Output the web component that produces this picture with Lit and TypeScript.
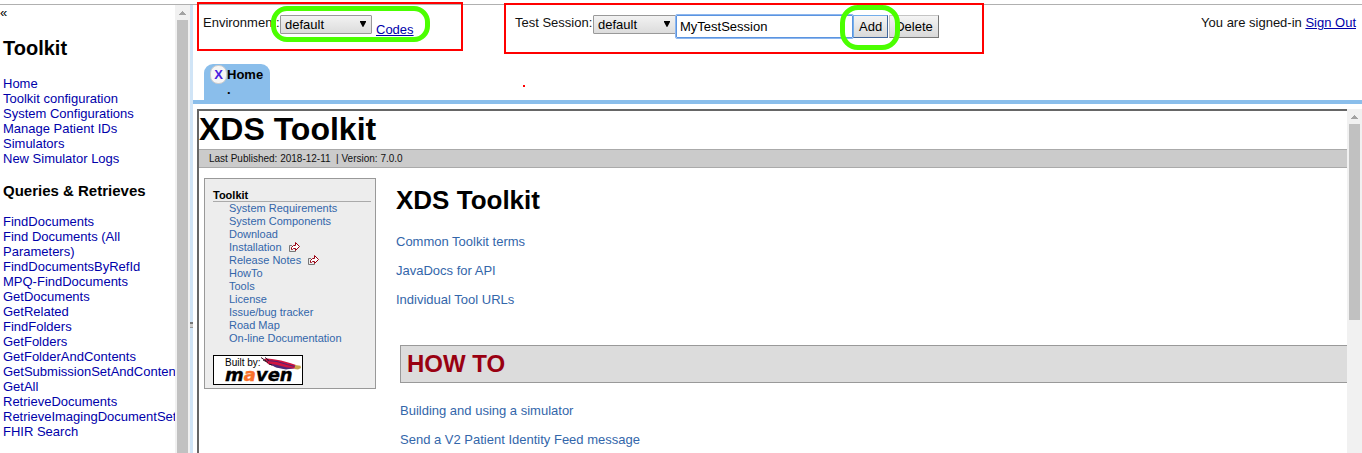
import { LitElement, html, css, svg } from "lit";
import { customElement, state } from "lit/decorators.js";

const TOOL_LINKS = [
  "Home",
  "Toolkit configuration",
  "System Configurations",
  "Manage Patient IDs",
  "Simulators",
  "New Simulator Logs",
];

const QUERY_LINKS = [
  "FindDocuments",
  "Find Documents (All Parameters)",
  "FindDocumentsByRefId",
  "MPQ-FindDocuments",
  "GetDocuments",
  "GetRelated",
  "FindFolders",
  "GetFolders",
  "GetFolderAndContents",
  "GetSubmissionSetAndContents",
  "GetAll",
  "RetrieveDocuments",
  "RetrieveImagingDocumentSet",
  "FHIR Search",
];

const SITE_LINKS: { label: string; external?: boolean }[] = [
  { label: "System Requirements" },
  { label: "System Components" },
  { label: "Download" },
  { label: "Installation", external: true },
  { label: "Release Notes", external: true },
  { label: "HowTo" },
  { label: "Tools" },
  { label: "License" },
  { label: "Issue/bug tracker" },
  { label: "Road Map" },
  { label: "On-line Documentation" },
];

@customElement("tk-scrollbar")
export class TkScrollbar extends LitElement {
  static styles = css`
    :host {
      display: flex;
      flex-direction: column;
      flex: none;
      width: 15px;
      background: #f1f1f1;
    }
    .arrow {
      display: block;
      flex: none;
      width: 15px;
      height: 15px;
    }
    .thumb {
      flex: 0 1 var(--thumb, 100%);
      margin: 0 2px;
      background: #c1c1c1;
    }
  `;
  render() {
    return html`
      <svg class="arrow" viewBox="0 0 15 15" shape-rendering="crispEdges">
        <path d="M4 10h7v-1h-1v-1h-1v-1h-1v-1h-1v1h-1v1h-1v1h-1z" fill="#a3a3a3" />
      </svg>
      <div class="thumb"></div>
    `;
  }
}

@customElement("tk-sidebar")
export class TkSidebar extends LitElement {
  static styles = css`
    :host {
      display: flex;
      flex: none;
      width: 190px;
      min-height: 0;
    }
    .scroll {
      flex: 1;
      min-width: 0;
      overflow: hidden;
    }
    .collapse {
      display: block;
      padding: 0;
      border: 0;
      background: none;
      font: inherit;
      color: #000;
      line-height: 15px;
    }
    .links {
      padding-left: 3px;
    }
    h2 {
      margin: 16px 0;
      font-size: 20px;
      line-height: 24px;
      color: #000;
    }
    h3 {
      margin: 16px 0 15px;
      font-size: 15px;
      line-height: 17px;
      color: #000;
    }
    ul {
      margin: 0;
      padding: 0;
      list-style: none;
    }
    a {
      display: block;
      line-height: 15px;
      color: #0000aa;
      text-decoration: none;
    }
  `;
  private list(items: string[]) {
    return html`<ul>
      ${items.map((t) => html`<li><a href="#">${t}</a></li>`)}
    </ul>`;
  }
  render() {
    return html`
      <div class="scroll">
        <button class="collapse" aria-label="Collapse menu">«</button>
        <nav class="links">
          <h2>Toolkit</h2>
          ${this.list(TOOL_LINKS)}
          <h3>Queries &amp; Retrieves</h3>
          ${this.list(QUERY_LINKS)}
        </nav>
      </div>
      <tk-scrollbar></tk-scrollbar>
    `;
  }
}

@customElement("tk-header")
export class TkHeader extends LitElement {
  static styles = css`
    :host {
      display: flex;
      align-items: flex-start;
      height: 59px;
      padding: 10px 6px 0 10px;
      box-sizing: border-box;
    }
    .group {
      position: relative;
      display: flex;
      align-items: flex-start;
    }
    .env {
      flex: 0 0 312px;
    }
    .label {
      min-width: 77px;
      line-height: 15px;
      white-space: nowrap;
    }
    .session .label {
      min-width: 78px;
    }
    .picker {
      display: grid;
      align-items: center;
    }
    .picker > * {
      grid-area: 1 / 1;
    }
    select {
      appearance: none;
      box-sizing: border-box;
      width: 92px;
      height: 19px;
      padding: 0 4px;
      border: 1px solid #999;
      border-radius: 1px;
      background: linear-gradient(#f2f2f2, #dcdcdc);
      font: inherit;
      color: #000;
    }
    select.narrow {
      width: 83px;
    }
    .caret {
      justify-self: end;
      width: 6px;
      height: 6px;
      margin: 0 6px 2px 0;
      pointer-events: none;
    }
    .codes {
      padding: 7px 0 0 4px;
      line-height: 15px;
    }
    a {
      color: #0000aa;
    }
    input {
      box-sizing: border-box;
      width: 177px;
      height: 23px;
      padding: 1px 3px;
      border: 1px solid #5b94e0;
      outline: 1px solid #8db6ee;
      border-radius: 1px;
      font: inherit;
      color: #000;
      background: #fff;
    }
    .push {
      box-sizing: border-box;
      height: 23px;
      padding: 0 5px;
      border: 1px solid;
      border-color: #c4c4c4 #777 #777 #c4c4c4;
      background: linear-gradient(#f4f4f4, #d9d9d9);
      font: inherit;
      color: #000;
    }
    .add {
      margin-right: 1px;
      border-color: #74aeea #41669c #41669c #74aeea;
    }
    .user {
      margin-left: auto;
      line-height: 15px;
      white-space: nowrap;
    }
    .mark {
      position: absolute;
      box-sizing: border-box;
      pointer-events: none;
    }
    .red {
      border: 2px solid #f00;
    }
    .green {
      border: 5px solid #4bff00;
    }
    .env-box {
      left: -6px;
      top: -13px;
      width: 266px;
      height: 49px;
    }
    .env-ring {
      left: 68px;
      top: -9px;
      width: 159px;
      height: 36px;
      border-radius: 16px;
    }
    .session-box {
      left: -11px;
      top: -12px;
      width: 480px;
      height: 51px;
    }
    .session-ring {
      left: 325px;
      top: -10px;
      width: 60px;
      height: 45px;
      border-radius: 18px;
    }
    .dot {
      left: 8px;
      top: 70px;
      width: 2px;
      height: 2px;
      background: #f00;
    }
  `;

  @state() private session = "MyTestSession";

  private caret() {
    return html`<svg class="caret" viewBox="0 0 6 6"><path d="M-.5 0h7L3 6.500z" /></svg>`;
  }

  render() {
    return html`
      <div class="group env">
        <label class="label" for="env">Environment:</label>
        <span class="picker">
          <select id="env"><option>default</option></select>
          ${this.caret()}
        </span>
        <span class="codes"><a href="#">Codes</a></span>
        <span class="mark red env-box"></span>
        <span class="mark green env-ring"></span>
      </div>
      <div class="group session">
        <label class="label" for="session">Test Session:</label>
        <span class="picker">
          <select id="session" class="narrow"><option>default</option></select>
          ${this.caret()}
        </span>
        <input
          type="text"
          aria-label="New test session"
          .value=${this.session}
          @input=${(e: Event) => (this.session = (e.target as HTMLInputElement).value)}
        />
        <button class="push add">Add</button>
        <button class="push">Delete</button>
        <span class="mark red session-box"></span>
        <span class="mark green session-ring"></span>
        <span class="mark dot"></span>
      </div>
      <div class="user">You are signed-in <a href="#">Sign Out</a></div>
    `;
  }
}

@customElement("tk-site")
export class TkSite extends LitElement {
  static styles = css`
    :host {
      display: flex;
      flex: 1;
      min-height: 0;
      margin: 5px 0 0 4px;
    }
    .doc {
      flex: 1;
      min-width: 0;
      overflow: hidden;
      border-top: 2px solid #666;
      border-left: 2px solid #666;
      background: #fff;
    }
    h1 {
      margin: 0;
      font-size: 32px;
      line-height: 36px;
      padding-bottom: 2px;
      color: #000;
    }
    .band {
      padding: 0 10px;
      border-top: 1px solid #aaa;
      border-bottom: 1px solid #aaa;
      background: #cbcbcb;
      font-size: 10px;
      line-height: 17px;
      white-space: pre;
    }
    .columns {
      display: flex;
      align-items: flex-start;
      padding: 10px 0 0 5px;
      gap: 20px;
    }
    .nav {
      box-sizing: border-box;
      flex: none;
      width: 172px;
      padding: 10px 4px 3px 8px;
      border: 1px solid #999;
      background: #ededed;
      font-size: 11px;
      line-height: 13px;
    }
    h5 {
      margin: 0;
      border-bottom: 1px solid #aaa;
      font-size: 11px;
      line-height: 12px;
      color: #000;
    }
    ul {
      margin: 0 0 10px;
      padding: 0 0 0 16px;
      list-style: none;
    }
    li {
      display: flex;
      align-items: flex-start;
      gap: 6px;
      height: 13px;
    }
    a {
      color: #3366aa;
      text-decoration: none;
    }
    .ext {
      width: 12px;
      height: 12px;
    }
    .maven {
      display: block;
      width: 90px;
      height: 30px;
    }
    .built {
      font: 10px "Liberation Sans", Arial, sans-serif;
    }
    .word {
      font: italic bold 18px "DejaVu Sans", sans-serif;
    }
    .body {
      flex: 1;
      min-width: 0;
    }
    h2 {
      margin: 7px 0 19px;
      font-size: 26px;
      line-height: 30px;
      color: #000;
    }
    p {
      margin: 0 0 14px;
      line-height: 15px;
    }
    .section {
      margin: 38px 0 0 4px;
    }
    .section h3 {
      margin: 0 0 20px;
      padding: 4px 6px;
      border: 1px solid #999;
      border-right: 0;
      background: #dcdcdc;
      font-size: 24px;
      line-height: 28px;
      color: #990011;
    }
  `;

  private external() {
    return html`<svg class="ext" viewBox="0 0 12 12" fill="none" aria-hidden="true">
      <path d="M4 4.500H1.500v6h6V9.500" stroke="#777" />
      <path d="M3.500 8.500V6.500L5.500 4.500H7.500V1.500L11.500 5.500 7.500 9.500V7.500H5.500L4.500 8.500z" fill="#fff" stroke="#990011" />
    </svg>`;
  }

  private maven() {
    return html`<svg class="maven" viewBox="0 0 90 30" role="img">
      <rect x=".5" y=".5" width="89" height="29" fill="#fff" stroke="#000" />
      ${svg`
        <path d="M51 4l3-.5 5 .5 9 1.500 9 2.500 6 2-1 3.500-9 .500-10-2-8-3z" fill="#d01440" />
        <path d="M56 8.500l8 1.500 10 2.500 8 .500-9 1.500-10-2z" fill="#4b2a78" />
        <path d="M54 5.500l10 1 10 3 8 2" stroke="#5a2070" stroke-width="1.200" fill="none" />
        <path d="M48 2.500l5 3.500M50 5l5 2.500M52 2.500l4 3M56 9l3 1" stroke="#301020" fill="none" />
        <path d="M82 10l5.500.8.500 2.200-3 1.500-3.500-.5z" fill="#c9a24a" />
      `}
      <text class="built" x="12" y="11">Built by:</text>
      <text class="word" x="12" y="26" stroke="#000" stroke-width=".4">m<tspan fill="#f9702a" stroke="#f9702a">a</tspan>ven</text>
    </svg>`;
  }

  render() {
    return html`
      <div class="doc">
        <h1>XDS Toolkit</h1>
        <div class="band">Last Published: 2018-12-11  | Version: 7.0.0</div>
        <div class="columns">
          <nav class="nav">
            <h5>Toolkit</h5>
            <ul>
              ${SITE_LINKS.map(
                (l) => html`<li><a href="#">${l.label}</a>${l.external ? this.external() : ""}</li>`
              )}
            </ul>
            ${this.maven()}
          </nav>
          <main class="body">
            <h2>XDS Toolkit</h2>
            <p><a href="#">Common Toolkit terms</a></p>
            <p><a href="#">JavaDocs for API</a></p>
            <p><a href="#">Individual Tool URLs</a></p>
            <section class="section">
              <h3>HOW TO</h3>
              <p><a href="#">Building and using a simulator</a></p>
              <p><a href="#">Send a V2 Patient Identity Feed message</a></p>
            </section>
          </main>
        </div>
      </div>
      <tk-scrollbar class="bar"></tk-scrollbar>
    `;
  }
}

@customElement("app-root")
export class AppRoot extends LitElement {
  static styles = css`
    :host {
      display: flex;
      box-sizing: border-box;
      height: 100vh;
      padding-top: 4px;
      overflow: hidden;
      background: #fff;
      color: #111;
      font: 13px "Liberation Sans", Arial, sans-serif;
    }
    .frame {
      display: flex;
      flex: 1;
      min-width: 0;
      border-top: 1px solid #b0b0b0;
    }
    .splitter {
      display: flex;
      flex-direction: column;
      justify-content: center;
      flex: none;
      width: 3px;
      padding-top: 191px;
      background: #d0e4f6;
    }
    .grip {
      height: 6px;
      border-top: 2px solid #777;
      border-bottom: 1px solid #999;
      box-sizing: border-box;
      background: #ccc;
    }
    .main {
      display: flex;
      flex-direction: column;
      flex: 1;
      min-width: 0;
    }
    .tabs {
      display: flex;
      padding-left: 11px;
      border-bottom: 4px solid #8abeeb;
    }
    .tab {
      display: flex;
      align-items: flex-start;
      box-sizing: border-box;
      height: 36px;
      padding: 1px 7px 0 6px;
      border-radius: 9px 9px 0 0;
      background: #8abeeb;
      font-weight: bold;
      color: #000;
    }
    .close {
      box-sizing: border-box;
      width: 17px;
      height: 19px;
      padding: 0;
      border: 1px solid #ccc;
      border-radius: 8px;
      background: #f6f6f6;
      font: inherit;
      line-height: 17px;
      color: #4a20e0;
    }
    .name {
      padding-top: 2px;
      line-height: 15px;
    }
    tk-site {
      --thumb: 196px;
    }
  `;
  render() {
    return html`
      <div class="frame">
        <tk-sidebar></tk-sidebar>
        <div class="splitter"><div class="grip"></div></div>
        <div class="main">
          <tk-header></tk-header>
          <div class="tabs">
            <div class="tab">
              <button class="close" aria-label="Close Home">X</button>
              <span class="name">Home<br />.</span>
            </div>
          </div>
          <tk-site></tk-site>
        </div>
      </div>
    `;
  }
}
